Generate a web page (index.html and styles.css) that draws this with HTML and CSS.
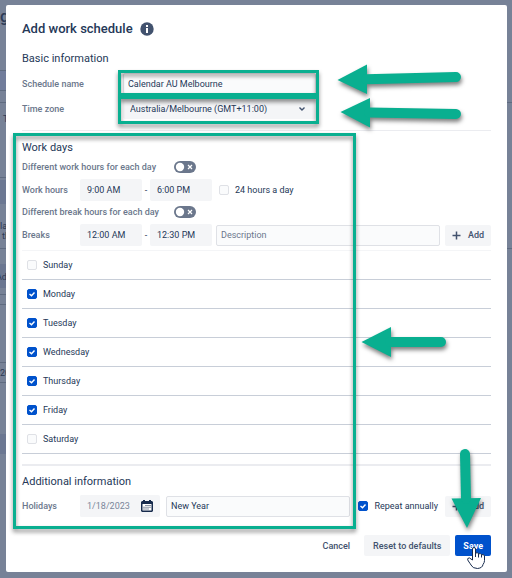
FILE: index.html
```html
<!DOCTYPE html>
<html lang="en">
<head>
  <meta charset="UTF-8" />
  <meta name="viewport" content="width=device-width, initial-scale=1.0" />
  <title>Add work schedule</title>
  <link rel="stylesheet" href="styles.css">
</head>
<body>
  <!-- dimmed page behind the dialog -->
  <svg class="backdrop" aria-hidden="true">
    <rect x="0" y="70" width="6" height="20" fill="#717d9b" />
    <rect x="0" y="180" width="6" height="24" fill="#6b7791" />
    <rect x="0" y="264" width="6" height="24" fill="#6b7791" />
    <rect x="0" y="434" width="6" height="20" fill="#6b7791" />
    <path d="M0 70.5h6M0 90.5h6M0 102.5h6M0 177.5h6M0 248.5h6M0 294.5h6M0 304.5h6M0 362.5h6M0 382.5h6M507 102.5h5M507 248.5h5" stroke="#5f6b80" />
    <text class="big" x="0" y="22">g</text>
    <text x="3" y="122">T</text>
    <text x="0" y="229">lar</text>
    <text x="2" y="239">th</text>
    <text x="-4" y="280">Ad</text>
    <text x="0" y="376">20</text>
  </svg>

  <main class="dialog" role="dialog" aria-labelledby="title">
    <header class="title">
      <h1 id="title">Add work schedule</h1>
      <svg width="14" height="14" viewBox="0 0 14 14" aria-label="Info">
        <circle cx="7" cy="7" r="6.7" fill="#42526e" />
        <rect x="6" y="3" width="2" height="2" fill="#fff" />
        <rect x="6" y="6" width="2" height="5" fill="#fff" />
      </svg>
    </header>

    <section>
      <h2>Basic information</h2>
      <div class="row">
        <label class="wide" for="name">Schedule name</label>
        <input class="text name" id="name" type="text" value="Calendar AU Melbourne">
      </div>
      <div class="row zone-row">
        <label class="wide" for="zone">Time zone</label>
        <select class="name" id="zone">
          <option>Australia/Melbourne (GMT+11:00)</option>
        </select>
      </div>
    </section>

    <section class="work">
      <h2>Work days</h2>
      <div class="row toggle-row">
        <label for="diff-work">Different work hours for each day</label>
        <input class="toggle" id="diff-work" type="checkbox" role="switch">
      </div>
      <div class="row">
        <label class="short" for="work-from">Work hours</label>
        <input class="time" id="work-from" type="text" value="9:00 AM">
        <span class="dash">-</span>
        <input class="time" type="text" aria-label="Work hours end" value="6:00 PM">
        <label class="check all-day"><input type="checkbox"> 24 hours a day</label>
      </div>
      <div class="row toggle-row">
        <label for="diff-break">Different break hours for each day</label>
        <input class="toggle" id="diff-break" type="checkbox" role="switch">
      </div>
      <div class="row">
        <label class="short" for="break-from">Breaks</label>
        <input class="time" id="break-from" type="text" value="12:00 AM">
        <span class="dash">-</span>
        <input class="time" type="text" aria-label="Break end" value="12:30 PM">
        <input class="text description" type="text" aria-label="Description" placeholder="Description">
        <button class="add" type="button">
          <svg width="9" height="9" viewBox="0 0 9 9"><path d="M4.5 .5v8M.5 4.5h8" stroke="#42526e" stroke-width="1.5" /></svg>
          Add
        </button>
      </div>

      <ul class="days">
        <li><label class="check"><input type="checkbox"> Sunday</label></li>
        <li><label class="check"><input type="checkbox" checked> Monday</label></li>
        <li><label class="check"><input type="checkbox" checked> Tuesday</label></li>
        <li><label class="check"><input type="checkbox" checked> Wednesday</label></li>
        <li><label class="check"><input type="checkbox" checked> Thursday</label></li>
        <li><label class="check"><input type="checkbox" checked> Friday</label></li>
        <li><label class="check"><input type="checkbox"> Saturday</label></li>
      </ul>
    </section>

    <section class="additional">
      <h2>Additional information</h2>
      <div class="row holiday-row">
        <label class="short" for="date">Holidays</label>
        <div class="date">
          <input id="date" type="text" value="1/18/2023">
          <svg width="12" height="12" viewBox="0 0 12 12">
            <path d="M1 1h1V0h2v1h4V0h2v1h1l1 1v9l-1 1H1l-1-1V2z" fill="#172b4d" />
            <path d="M1.500 4h9v6.500h-9z" fill="#fff" />
            <path d="M4.500 5h1v1h-1zM6.500 5h1v1h-1zM8.500 5h1v1h-1zM2.500 6.700h1v1h-1zM4.500 6.700h1v1h-1zM6.500 6.700h1v1h-1zM8.500 6.700h1v1h-1zM2.500 8.500h1v1h-1zM4.500 8.500h1v1h-1zM6.500 8.500h1v1h-1z" fill="#172b4d" />
          </svg>
        </div>
        <input class="text holiday" type="text" aria-label="Holiday name" value="New Year">
        <label class="check repeat"><input type="checkbox" checked> Repeat annually</label>
        <button class="add" type="button">
          <svg width="9" height="9" viewBox="0 0 9 9"><path d="M4.5 .5v8M.5 4.5h8" stroke="#42526e" stroke-width="1.5" /></svg>
          Add
        </button>
      </div>
    </section>

    <footer>
      <button class="link" type="button">Cancel</button>
      <button type="button">Reset to defaults</button>
      <button class="primary" type="button">Save</button>
    </footer>
  </main>

  <!-- highlight boxes, arrows and mouse pointer -->
  <svg class="marks" width="512" height="578" aria-hidden="true">
    <g class="boxes">
      <rect x="119.500" y="71.500" width="198" height="23" />
      <rect x="119.500" y="97.500" width="198" height="25" />
      <path d="M118 96h201" />
      <rect x="14.500" y="134.500" width="340" height="393" />
    </g>
    <g class="arrow">
      <path class="head" d="M337.500 80 367 64.500V94z" />
      <path class="shaft" d="M366 79.200 456 77" />
    </g>
    <g class="arrow">
      <path class="head" d="M340.500 112 370 98v29.500z" />
      <path class="shaft" d="M369 112.600 456 114" />
    </g>
    <g class="arrow">
      <path class="head" d="M361.500 342 391 327v30z" />
      <path class="shaft" d="M390 342h51" />
    </g>
    <g class="arrow">
      <path class="head" d="M467 528 451.500 498.500 481 498z" />
      <path class="shaft" d="M466 499 465 454" />
    </g>
    <path class="hand" d="M472.500 560v-11q0-1.500 1.500-1.500t1.500 1.500v4q2.500-.8 3 .8 2.500-.6 3 .8 3-.4 3 1.400v4.500q0 2-1.500 4-.5 3.500-5.500 4-5 0-6.500-3.500-.5-1-2-3-2-2.500-1.200-3.500 1.500-1.500 3.200.5z" />
    <path class="lines" d="M475.500 552v5M478.500 553.500v4M481.500 554.500v3" />
  </svg>
</body>
</html>
```

FILE: styles.css
```css
* {
  box-sizing: border-box;
}

body {
  margin: 0;
  padding: 5px 5px 6px 6px;
  min-height: 100vh;
  background: #778297;
  color: #253858;
  font-family: Roboto, sans-serif;
  font-size: 9px;
  line-height: 12px;
}

.backdrop {
  position: absolute;
  left: 0;
  top: 0;
  width: 100%;
  height: 100%;
  fill: #2c3a55;
}

.backdrop .big {
  font-size: 16px;
  font-weight: 500;
}

.dialog {
  position: relative;
  padding: 16px;
  border-radius: 2px;
  background: #fff;
}

.title {
  display: flex;
  align-items: center;
  gap: 7px;
}

h1,
h2 {
  margin: 0;
  line-height: 16px;
}

h1 {
  font-size: 13px;
  font-weight: 500;
}

h2 {
  margin-bottom: 5px;
  font-size: 11px;
  font-weight: 400;
}

.title + section {
  margin-top: 14px;
  padding-bottom: 11px;
  border-bottom: 1px solid #ebecf0;
}

.row {
  display: flex;
  align-items: center;
  margin-top: 6px;
}

.zone-row,
.toggle-row,
.holiday-row {
  margin-top: 5px;
}

.row > label {
  flex: none;
  color: #6b778c;
  font-weight: 500;
  white-space: nowrap;
}

.row > .wide {
  width: 101px;
}

.row > .short {
  width: 58px;
}

input,
select,
button {
  margin: 0;
  font: inherit;
  color: inherit;
}

input[type="text"],
select {
  min-width: 0;
  height: 22px;
  padding: 0 7px;
  border: none;
  border-radius: 2px;
  background: #f4f5f7;
}

input[type="text"].text {
  height: 21px;
  padding: 0 4px;
  border: 1px solid #dfe1e6;
  background: #fafbfc;
}

.name {
  width: 193px;
}

select {
  height: 20px;
  appearance: none;
  background: #f4f5f7 url("data:image/svg+xml,%3Csvg xmlns='http://www.w3.org/2000/svg' width='6' height='4'%3E%3Cpath d='M.5.5 3 3 5.500.5' fill='none' stroke='%2342526e' stroke-width='1.4'/%3E%3C/svg%3E") no-repeat right 11px center;
}

input.time {
  width: 62px;
}

.dash {
  width: 8px;
  text-align: center;
}

.work {
  padding-top: 9px;
}

.toggle-row > label {
  width: 152px;
}

.toggle {
  width: 22px;
  height: 12px;
  appearance: none;
  border-radius: 6px;
  background: #6b778c url("data:image/svg+xml,%3Csvg xmlns='http://www.w3.org/2000/svg' width='22' height='12'%3E%3Ccircle cx='6' cy='6' r='4.200' fill='white'/%3E%3Cpath d='M14 4l4 4M18 4l-4 4' stroke='white' stroke-width='1.200'/%3E%3C/svg%3E");
}

.check {
  display: flex;
  align-items: center;
  gap: 6px;
}

.row > .check {
  color: inherit;
  font-weight: 400;
}

.check input {
  width: 10px;
  height: 10px;
  appearance: none;
  border: 1px solid #dfe1e6;
  border-radius: 2px;
  background: #fafbfc;
}

.check input:checked {
  border-color: #0052cc;
  background: #0052cc url("data:image/svg+xml,%3Csvg xmlns='http://www.w3.org/2000/svg' width='8' height='8'%3E%3Cpath d='M1.500 4l2 1.800L6.500 2.500' fill='none' stroke='white' stroke-width='1.400'/%3E%3C/svg%3E") no-repeat center;
}

.all-day {
  margin-left: 7px;
}

input.description {
  flex: 1;
  margin-left: 4px;
  margin-right: 5px;
}

input.description::placeholder {
  color: #6b778c;
  opacity: 1;
}

button {
  height: 21px;
  padding: 0 9px;
  border: none;
  border-radius: 2px;
  background: #f4f5f7;
  color: #42526e;
  font-weight: 500;
}

.add {
  display: flex;
  align-items: center;
  justify-content: center;
  gap: 7px;
  flex: none;
  width: 46px;
  padding: 0;
}

.days {
  margin: 4px 0 0;
  padding: 0;
  border-top: 1px solid #f4f5f7;
  list-style: none;
}

.days li {
  display: flex;
  align-items: center;
  height: 29px;
  padding-left: 5px;
  border-bottom: 1px solid #c8ced8;
}

.additional {
  margin-top: 10px;
  padding-top: 8px;
  border-top: 2px solid #ebecf0;
}

.date {
  display: flex;
  align-items: center;
  width: 80px;
  padding-right: 7px;
  border-radius: 2px;
  background: #f4f5f7;
}

.date input {
  flex: 1;
  color: #7a869a;
}

.date svg {
  flex: none;
}

input.holiday {
  flex: 1;
  margin: 0 8px 0 6px;
}

.repeat {
  margin-right: 7px;
}

footer {
  display: flex;
  justify-content: flex-end;
  gap: 5px;
  margin-top: 18px;
}

.link {
  background: none;
}

.primary {
  padding: 0 8px;
  background: #0052cc;
  color: #fff;
  font-weight: 700;
}

.marks {
  position: absolute;
  left: 0;
  top: 0;
  pointer-events: none;
}

.boxes {
  fill: none;
  stroke: #09af90;
  stroke-width: 3;
  filter: drop-shadow(0 3px 2px rgba(0, 0, 0, 0.45));
}

.arrow {
  fill: #09af90;
  filter: drop-shadow(1px 3px 2px rgba(0, 0, 0, 0.5));
}

.shaft {
  stroke: #09af90;
  stroke-width: 10;
  stroke-linecap: round;
}

.hand {
  fill: #fff;
  stroke: #172b4d;
}

.lines {
  stroke: #172b4d;
}
```
